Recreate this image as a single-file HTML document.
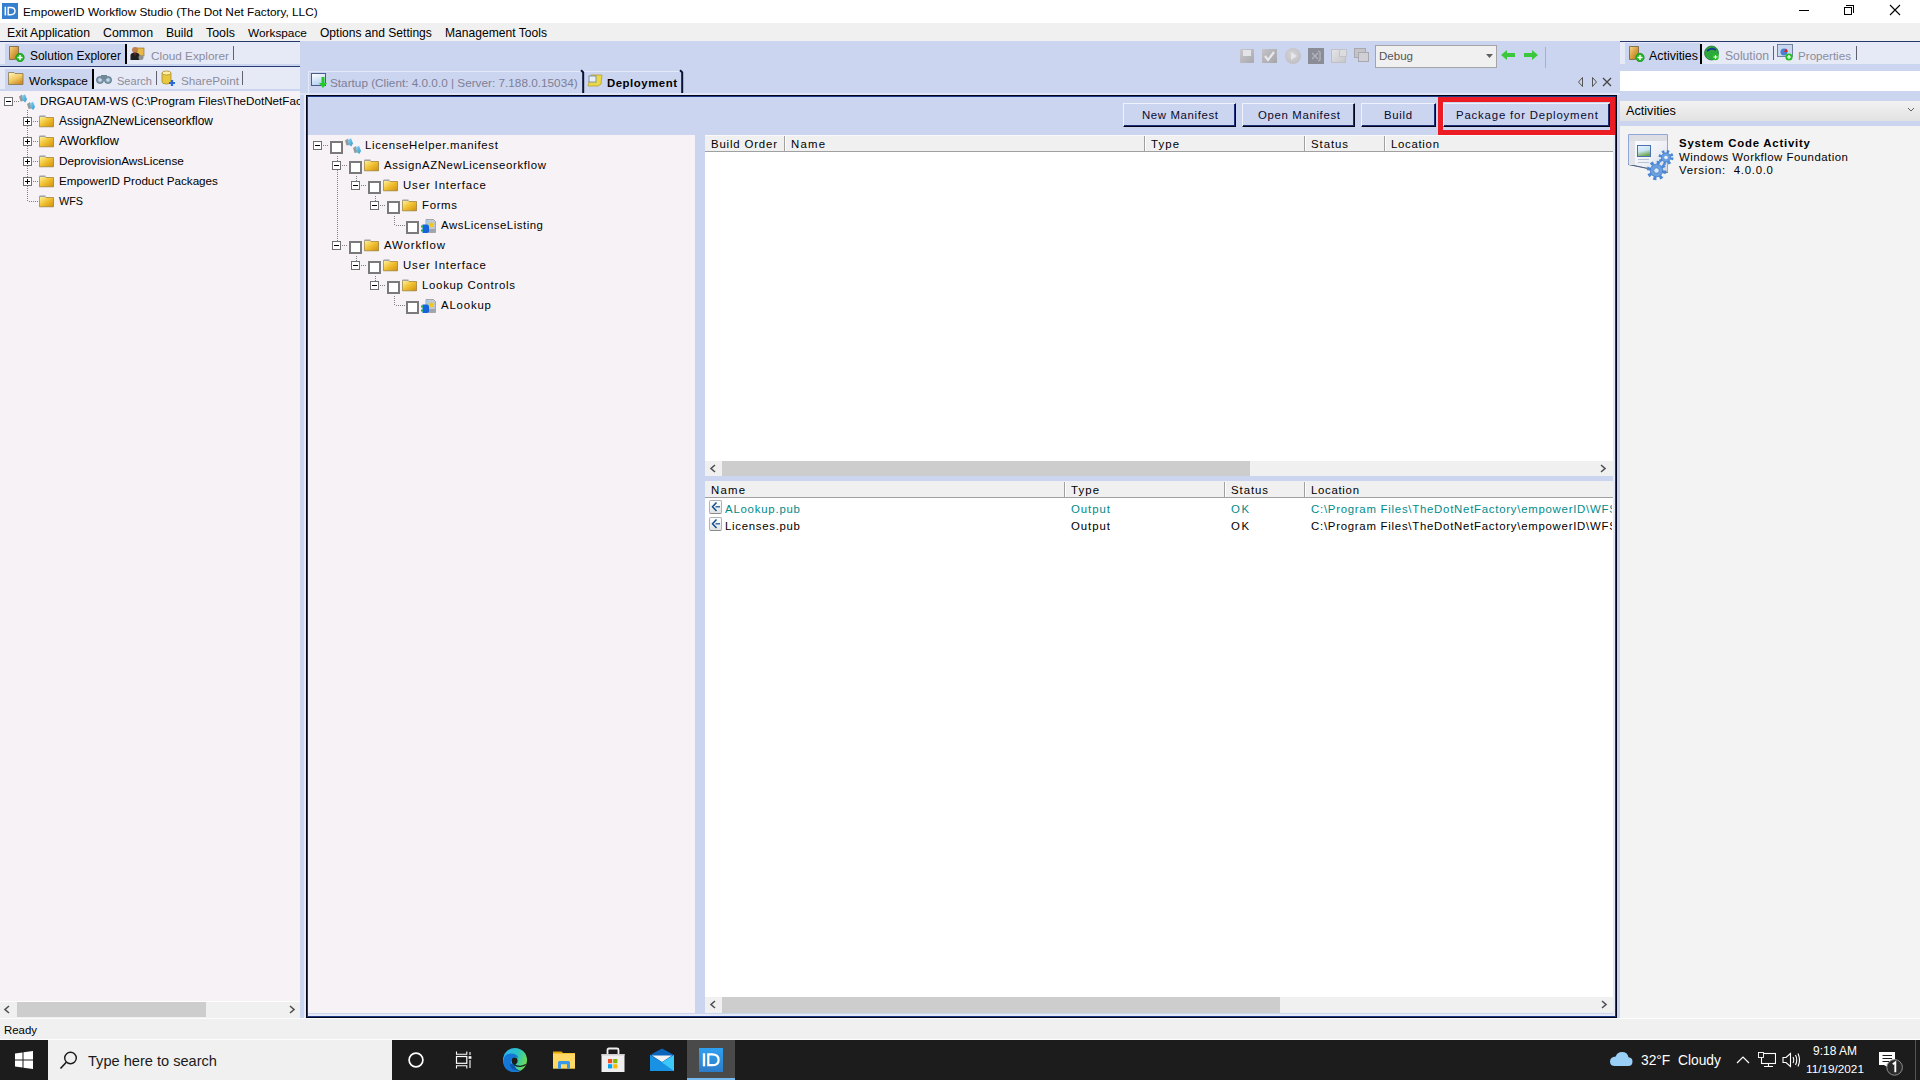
<!DOCTYPE html>
<html><head><meta charset="utf-8">
<style>
*{margin:0;padding:0;box-sizing:border-box}
html,body{width:1920px;height:1080px;overflow:hidden;background:#f0f0f0;font-family:"Liberation Sans",sans-serif;font-size:12px;color:#000}
.a{position:absolute}
.t{position:absolute;white-space:nowrap;line-height:1}
</style></head><body>
<div class="a" style="left:0px;top:0px;width:1920px;height:23px;background:#fff"></div>
<div class="a" style="left:2px;top:3px;width:16px;height:16px;background:#3480cf"></div>
<svg class="a" style="left:2px;top:3px" width="16" height="16"><rect x="2.6" y="3.8" width="1.5" height="8.6" fill="#fff"/><path d="M6.2 4.5H8.6Q13 4.5 13 8.1Q13 11.7 8.6 11.7H6.2Z" stroke="#fff" stroke-width="1.4" fill="none"/></svg>
<div class="t" style="left:23px;top:7px;font-size:11.81px;color:#000;font-weight:normal;">EmpowerID Workflow Studio (The Dot Net Factory, LLC)</div>
<div class="a" style="left:1799px;top:10px;width:10px;height:1px;background:#000"></div>
<div class="a" style="left:1846px;top:5px;width:8px;height:8px;border:1px solid #000;border-left:none;border-bottom:none"></div>
<div class="a" style="left:1844px;top:7px;width:8px;height:8px;border:1px solid #000;background:#fff"></div>
<svg class="a" style="left:1889px;top:4px" width="12" height="12"><path d="M1 1L11 11M11 1L1 11" stroke="#000" stroke-width="1.1"/></svg>
<div class="a" style="left:0px;top:23px;width:1920px;height:18px;background:#f0f0f0"></div>
<div class="t" style="left:7px;top:27px;font-size:12.24px;color:#000;font-weight:normal;">Exit Application</div>
<div class="t" style="left:103px;top:27px;font-size:12.33px;color:#000;font-weight:normal;">Common</div>
<div class="t" style="left:166px;top:27px;font-size:12.14px;color:#000;font-weight:normal;">Build</div>
<div class="t" style="left:206px;top:27px;font-size:12.42px;color:#000;font-weight:normal;">Tools</div>
<div class="t" style="left:248px;top:28px;font-size:11.84px;color:#000;font-weight:normal;">Workspace</div>
<div class="t" style="left:320px;top:27px;font-size:12.06px;color:#000;font-weight:normal;">Options and Settings</div>
<div class="t" style="left:445px;top:27px;font-size:12.1px;color:#000;font-weight:normal;">Management Tools</div>
<div class="a" style="left:0px;top:41px;width:300px;height:1px;background:#27396f"></div>
<div class="a" style="left:0px;top:42px;width:300px;height:24px;background:#e6e9f6"></div>
<div class="a" style="left:5px;top:44px;width:120px;height:20px;background:#cbd5ef"></div>
<div class="a" style="left:0px;top:64px;width:300px;height:2px;background:#cbd5ef"></div>
<div class="a" style="left:0px;top:66px;width:300px;height:1px;background:#27396f"></div>
<div class="a" style="left:0px;top:67px;width:300px;height:24px;background:#e6e9f6"></div>
<div class="a" style="left:5px;top:69px;width:87px;height:20px;background:#cbd5ef"></div>
<div class="a" style="left:0px;top:89px;width:300px;height:2px;background:#cbd5ef"></div>
<div class="a" style="left:0px;top:91px;width:300px;height:910px;background:#f6f2f6"></div>
<div class="a" style="left:0px;top:1001px;width:300px;height:17px;background:#f0f0f0"></div>
<div class="a" style="left:300px;top:41px;width:1320px;height:977px;background:#cbd5ef"></div>
<svg class="a" style="left:8px;top:45px" width="17" height="17"><path d="M1.5 1.5H10.5V13.5L6 14.5H1.5Z" fill="url(#sg)" stroke="#706040" stroke-width="0.8"/><circle cx="12" cy="12.5" r="4.2" fill="#22b822" stroke="#108010" stroke-width="0.6"/><path d="M12 10V15M9.5 12.5H14.5" stroke="#fff" stroke-width="1.4"/></svg>
<div class="t" style="left:30px;top:51px;font-size:11.95px;color:#000;font-weight:normal;">Solution Explorer</div>
<div class="a" style="left:125px;top:44px;width:2px;height:20px;background:#000"></div>
<svg class="a" style="left:130px;top:46px" width="15" height="15"><rect x="6" y="2" width="8" height="8" fill="#e8b848" stroke="#8a6a20" stroke-width="0.6"/><circle cx="5" cy="4" r="3" fill="#c08050"/><path d="M0.5 14V9Q1 6.5 5 6.5Q9 6.5 9.5 9V14Z" fill="#202020"/><path d="M4.5 7L5 11L5.5 7Z" fill="#d02020"/><circle cx="11" cy="11.5" r="2.5" fill="#909090"/></svg>
<div class="t" style="left:151px;top:50px;font-size:11.79px;color:#8c8c9c;font-weight:normal;">Cloud Explorer</div>
<div class="a" style="left:233px;top:46px;width:1px;height:14px;background:#606070"></div>
<svg class="a" style="left:8px;top:72px" width="16" height="13"><path d="M0.5 0.5H6L7 1.5H15V12.5H0.5Z" fill="url(#fg2)" stroke="#7a6a40" stroke-width="0.7"/></svg>
<div class="t" style="left:29px;top:76px;font-size:11.84px;color:#000;font-weight:normal;">Workspace</div>
<div class="a" style="left:92px;top:69px;width:2px;height:20px;background:#000"></div>
<svg class="a" style="left:96px;top:73px" width="16" height="11"><circle cx="4" cy="7" r="3.6" fill="#7a9ab0" stroke="#506070" stroke-width="0.6"/><circle cx="12" cy="7" r="3.6" fill="#7a9ab0" stroke="#506070" stroke-width="0.6"/><rect x="5" y="2" width="6" height="4" fill="#708898"/><circle cx="4" cy="7" r="1.8" fill="#c8dce8"/><circle cx="12" cy="7" r="1.8" fill="#c8dce8"/></svg>
<div class="t" style="left:117px;top:76px;font-size:11.05px;color:#8c8c9c;font-weight:normal;">Search</div>
<div class="a" style="left:156px;top:71px;width:1px;height:14px;background:#606070"></div>
<svg class="a" style="left:161px;top:70px" width="15" height="17"><path d="M1 3V12Q1 14 5.5 14Q10 14 10 12V3Z" fill="#e8c840" stroke="#a08020" stroke-width="0.7"/><ellipse cx="5.5" cy="3" rx="4.5" ry="2" fill="#fff0a0" stroke="#a08020" stroke-width="0.7"/><path d="M11 10V16M8 13H14" stroke="#2a6ad8" stroke-width="2.2"/></svg>
<div class="t" style="left:181px;top:75px;font-size:11.72px;color:#8c8c9c;font-weight:normal;">SharePoint</div>
<div class="a" style="left:242px;top:71px;width:1px;height:14px;background:#606070"></div>
<svg width="0" height="0" style="position:absolute"><defs><linearGradient id="sg" x1="0" y1="0" x2="1" y2="1"><stop offset="0" stop-color="#f8d890"/><stop offset="0.5" stop-color="#d8a040"/><stop offset="1" stop-color="#b07820"/></linearGradient><linearGradient id="fg2" x1="0" y1="0" x2="0.6" y2="1"><stop offset="0" stop-color="#fff8c0"/><stop offset="0.6" stop-color="#f0c860"/><stop offset="1" stop-color="#d09030"/></linearGradient></defs></svg>
<div class="a" style="left:0px;top:1001px;width:300px;height:1px;background:#fff"></div>
<div class="a" style="left:17px;top:1002px;width:189px;height:15px;background:#cdcdcd"></div>
<svg class="a" style="left:3px;top:1005px" width="8" height="9"><path d="M6 1L2 4.5L6 8" stroke="#505050" stroke-width="1.6" fill="none"/></svg>
<svg class="a" style="left:288px;top:1005px" width="8" height="9"><path d="M2 1L6 4.5L2 8" stroke="#505050" stroke-width="1.6" fill="none"/></svg>
<div class="a" style="left:1240px;top:49px;width:14px;height:14px;background:linear-gradient(135deg,#c8c8cc,#a8a8ae);border-radius:1px"></div>
<div class="a" style="left:1243px;top:50px;width:8px;height:6px;background:#e4e4e8"></div>
<div class="a" style="left:1262px;top:49px;width:15px;height:14px;background:linear-gradient(135deg,#c4c4c8,#a4a4aa)"></div>
<svg class="a" style="left:1262px;top:49px" width="15" height="14"><path d="M3 7L6 11L12 3" stroke="#e8e8ec" stroke-width="2.2" fill="none"/></svg>
<div class="a" style="left:1285px;top:48px;width:16px;height:16px;background:radial-gradient(circle at 45% 40%,#d4d4d8,#b8b8be);border-radius:50%"></div>
<svg class="a" style="left:1285px;top:48px" width="16" height="16"><path d="M6 4L12 8L6 12Z" fill="#e6e6ea"/></svg>
<div class="a" style="left:1308px;top:48px;width:16px;height:16px;background:#8a8c96"></div>
<svg class="a" style="left:1308px;top:48px" width="16" height="16"><path d="M4 5L10 11M4 11L10 5M10 3L12 4V12L10 13" stroke="#b4b6be" stroke-width="1.3" fill="none"/></svg>
<div class="a" style="left:1331px;top:49px;width:15px;height:14px;background:linear-gradient(135deg,#e4e4e8,#c8c8cc);border:1px solid #c0c0c4"></div>
<div class="a" style="left:1339px;top:49px;width:8px;height:8px;background:#dcdce0;border:1px solid #c4c4c8"></div>
<div class="a" style="left:1354px;top:48px;width:12px;height:10px;background:#c4c4c8;border:1px solid #a8a8ae"></div>
<div class="a" style="left:1358px;top:52px;width:11px;height:10px;background:#d0d0d4;border:1px solid #a8a8ae"></div>
<div class="a" style="left:1375px;top:45px;width:122px;height:23px;background:#f0f0f0;border:1px solid #a4a4a8"></div>
<div class="t" style="left:1379px;top:51px;font-size:11.54px;color:#555;font-weight:normal;">Debug</div>
<svg class="a" style="left:1486px;top:54px" width="7" height="4"><path d="M0 0H7L3.5 4Z" fill="#606060"/></svg>
<svg class="a" style="left:1500px;top:49px" width="16" height="12"><path d="M1 6L7 1V4H15V8H7V11Z" fill="#3cc83c"/></svg>
<svg class="a" style="left:1523px;top:49px" width="16" height="12"><path d="M15 6L9 1V4H1V8H9V11Z" fill="#3cc83c"/></svg>
<div class="a" style="left:1545px;top:47px;width:1px;height:21px;background:#a8b0c8"></div>
<svg class="a" style="left:1576px;top:76px" width="44" height="12"><path d="M6.5 1.5L2.5 6L6.5 10.5Z" stroke="#555" fill="none"/><path d="M16.5 1.5L20.5 6L16.5 10.5Z" stroke="#555" fill="none"/><path d="M27 2L35 10M35 2L27 10" stroke="#444" stroke-width="1.3"/></svg>
<div class="a" style="left:308px;top:71px;width:274px;height:1px;background:#e4e9f8"></div>
<div class="a" style="left:308px;top:71px;width:1px;height:22px;background:#e4e9f8"></div>
<div class="a" style="left:584px;top:71px;width:98px;height:1px;background:#e4e9f8"></div>
<div class="a" style="left:300px;top:93px;width:1320px;height:2px;background:#dfe5f6"></div>
<div class="a" style="left:311px;top:73px;width:15px;height:13px;background:linear-gradient(160deg,#ffffff,#a8c8f0);border:1px solid #4a5a8a"></div>
<svg class="a" style="left:319px;top:77px" width="8" height="12"><path d="M2.5 0H5.5V6H8L4 11L0 6H2.5Z" fill="#22cc22"/></svg>
<div class="t" style="left:330px;top:77px;font-size:11.78px;color:#7e7e96;font-weight:normal;">Startup (Client: 4.0.0.0 | Server: 7.188.0.15034)</div>
<svg class="a" style="left:580px;top:69px" width="6" height="25"><path d="M1 1.2L3.2 3.4V24" stroke="#0b1236" stroke-width="2" fill="none"/></svg>
<svg class="a" style="left:679px;top:69px" width="6" height="25"><path d="M1 1.2L3.2 3.4V24" stroke="#0b1236" stroke-width="2" fill="none"/></svg>
<svg class="a" style="left:587px;top:73px" width="16" height="15"><path d="M4 2H15L14 11L11 13H1Z" fill="#e8d84a" stroke="#b8a028" stroke-width="0.8"/><rect x="2" y="3" width="7" height="6" fill="#e8eef8" stroke="#7080a0" stroke-width="0.8"/></svg>
<div class="t" style="left:607px;top:78px;font-size:11.4px;color:#000;font-weight:bold;letter-spacing:0.528px;">Deployment</div>
<div class="a" style="left:306px;top:95px;width:1311px;height:923px;border:1px solid #02041a;box-shadow:inset 0 0 0 1px #1e3a86"></div>
<div class="a" style="left:304px;top:95px;width:2px;height:923px;background:#e6eaf8"></div>
<div class="a" style="left:308px;top:1014px;width:1307px;height:2px;background:#e6eaf8"></div>
<div class="a" style="left:1613px;top:97px;width:2px;height:919px;background:#e6eaf8"></div>
<div class="a" style="left:308px;top:135px;width:387px;height:878px;background:#f6f2f6"></div>
<div class="a" style="left:1123px;top:103px;width:113px;height:24px;background:#cbd5ef;border-style:solid;border-width:1px 1px 1px 1px;border-color:#eef2fb #02041a #02041a #eef2fb;box-shadow:inset -1px -1px 0 #1e3078"></div>
<div class="t" style="left:1142px;top:110px;font-size:11.4px;color:#0a0a30;font-weight:normal;letter-spacing:0.631px;">New Manifest</div>
<div class="a" style="left:1242px;top:103px;width:113px;height:24px;background:#cbd5ef;border-style:solid;border-width:1px 1px 1px 1px;border-color:#eef2fb #02041a #02041a #eef2fb;box-shadow:inset -1px -1px 0 #1e3078"></div>
<div class="t" style="left:1258px;top:110px;font-size:11.4px;color:#0a0a30;font-weight:normal;letter-spacing:0.655px;">Open Manifest</div>
<div class="a" style="left:1361px;top:103px;width:75px;height:24px;background:#cbd5ef;border-style:solid;border-width:1px 1px 1px 1px;border-color:#eef2fb #02041a #02041a #eef2fb;box-shadow:inset -1px -1px 0 #1e3078"></div>
<div class="t" style="left:1384px;top:110px;font-size:11.4px;color:#0a0a30;font-weight:normal;letter-spacing:0.662px;">Build</div>
<div class="a" style="left:1443px;top:103px;width:167px;height:24px;background:#cbd5ef;border-style:solid;border-width:1px 1px 1px 1px;border-color:#eef2fb #02041a #02041a #eef2fb;box-shadow:inset -1px -1px 0 #1e3078"></div>
<div class="t" style="left:1456px;top:110px;font-size:11.4px;color:#0a0a30;font-weight:normal;letter-spacing:0.817px;">Package for Deployment</div>
<div class="a" style="left:1438px;top:97px;width:177px;height:38px;border:5px solid #ec1c24"></div>
<div class="a" style="left:705px;top:135px;width:908px;height:326px;background:#fff"></div>
<div class="a" style="left:705px;top:135px;width:908px;height:17px;background:#f0f0f0;border-bottom:1px solid #a0a0a0;border-top:1px solid #fafafa"></div>
<div class="a" style="left:784px;top:136px;width:1px;height:15px;background:#a0a0a0"></div>
<div class="a" style="left:785px;top:136px;width:1px;height:15px;background:#fff"></div>
<div class="a" style="left:1144px;top:136px;width:1px;height:15px;background:#a0a0a0"></div>
<div class="a" style="left:1145px;top:136px;width:1px;height:15px;background:#fff"></div>
<div class="a" style="left:1304px;top:136px;width:1px;height:15px;background:#a0a0a0"></div>
<div class="a" style="left:1305px;top:136px;width:1px;height:15px;background:#fff"></div>
<div class="a" style="left:1384px;top:136px;width:1px;height:15px;background:#a0a0a0"></div>
<div class="a" style="left:1385px;top:136px;width:1px;height:15px;background:#fff"></div>
<div class="t" style="left:711px;top:139px;font-size:11.4px;color:#000;font-weight:normal;letter-spacing:0.834px;">Build Order</div>
<div class="t" style="left:791px;top:139px;font-size:11.4px;color:#000;font-weight:normal;letter-spacing:1.197px;">Name</div>
<div class="t" style="left:1151px;top:139px;font-size:11.4px;color:#000;font-weight:normal;letter-spacing:1.095px;">Type</div>
<div class="t" style="left:1311px;top:139px;font-size:11.4px;color:#000;font-weight:normal;letter-spacing:0.936px;">Status</div>
<div class="t" style="left:1391px;top:139px;font-size:11.4px;color:#000;font-weight:normal;letter-spacing:0.700px;">Location</div>
<div class="a" style="left:705px;top:461px;width:908px;height:15px;background:#f0f0f0"></div>
<div class="a" style="left:722px;top:461px;width:528px;height:15px;background:#cdcdcd"></div>
<svg class="a" style="left:709px;top:464px" width="8" height="9"><path d="M6 1L2 4.5L6 8" stroke="#505050" stroke-width="1.6" fill="none"/></svg>
<svg class="a" style="left:1599px;top:464px" width="8" height="9"><path d="M2 1L6 4.5L2 8" stroke="#505050" stroke-width="1.6" fill="none"/></svg>
<div class="a" style="left:705px;top:481px;width:908px;height:516px;background:#fff"></div>
<div class="a" style="left:705px;top:481px;width:908px;height:17px;background:#f0f0f0;border-bottom:1px solid #a0a0a0"></div>
<div class="a" style="left:1064px;top:482px;width:1px;height:15px;background:#a0a0a0"></div>
<div class="a" style="left:1065px;top:482px;width:1px;height:15px;background:#fff"></div>
<div class="a" style="left:1224px;top:482px;width:1px;height:15px;background:#a0a0a0"></div>
<div class="a" style="left:1225px;top:482px;width:1px;height:15px;background:#fff"></div>
<div class="a" style="left:1304px;top:482px;width:1px;height:15px;background:#a0a0a0"></div>
<div class="a" style="left:1305px;top:482px;width:1px;height:15px;background:#fff"></div>
<div class="t" style="left:711px;top:485px;font-size:11.4px;color:#000;font-weight:normal;letter-spacing:1.197px;">Name</div>
<div class="t" style="left:1071px;top:485px;font-size:11.4px;color:#000;font-weight:normal;letter-spacing:1.095px;">Type</div>
<div class="t" style="left:1231px;top:485px;font-size:11.4px;color:#000;font-weight:normal;letter-spacing:0.936px;">Status</div>
<div class="t" style="left:1311px;top:485px;font-size:11.4px;color:#000;font-weight:normal;letter-spacing:0.700px;">Location</div>
<div class="a" style="left:709px;top:500px;width:13px;height:14px;background:linear-gradient(#ffffff,#e2e2e2);border:1px solid #b0b0b0;border-bottom-color:#8a8a8a;border-radius:2px"></div>
<svg class="a" style="left:709px;top:500px" width="13" height="14"><path d="M7.5 2.5L3.5 6.8L7.5 11" stroke="#0c4c94" stroke-width="1.5" fill="none"/><path d="M6.5 6.8H11" stroke="#0c4c94" stroke-width="1.2"/></svg>
<div class="t" style="left:725px;top:504px;font-size:11.4px;color:#008b8b;font-weight:normal;letter-spacing:0.781px;">ALookup.pub</div>
<div class="t" style="left:1071px;top:504px;font-size:11.4px;color:#008b8b;font-weight:normal;letter-spacing:0.955px;">Output</div>
<div class="t" style="left:1231px;top:504px;font-size:11.4px;color:#008b8b;font-weight:normal;letter-spacing:1.529px;">OK</div>
<div class="t" style="left:1311px;top:504px;font-size:11.4px;color:#008b8b;font-weight:normal;width:301px;overflow:hidden;letter-spacing:0.744px;">C:\Program Files\TheDotNetFactory\empowerID\WFS</div>
<div class="a" style="left:709px;top:517px;width:13px;height:14px;background:linear-gradient(#ffffff,#e2e2e2);border:1px solid #b0b0b0;border-bottom-color:#8a8a8a;border-radius:2px"></div>
<svg class="a" style="left:709px;top:517px" width="13" height="14"><path d="M7.5 2.5L3.5 6.8L7.5 11" stroke="#0c4c94" stroke-width="1.5" fill="none"/><path d="M6.5 6.8H11" stroke="#0c4c94" stroke-width="1.2"/></svg>
<div class="t" style="left:725px;top:521px;font-size:11.4px;color:#000;font-weight:normal;letter-spacing:0.711px;">Licenses.pub</div>
<div class="t" style="left:1071px;top:521px;font-size:11.4px;color:#000;font-weight:normal;letter-spacing:0.955px;">Output</div>
<div class="t" style="left:1231px;top:521px;font-size:11.4px;color:#000;font-weight:normal;letter-spacing:1.529px;">OK</div>
<div class="t" style="left:1311px;top:521px;font-size:11.4px;color:#000;font-weight:normal;width:301px;overflow:hidden;letter-spacing:0.744px;">C:\Program Files\TheDotNetFactory\empowerID\WFS</div>
<div class="a" style="left:705px;top:997px;width:908px;height:16px;background:#f0f0f0"></div>
<div class="a" style="left:722px;top:997px;width:558px;height:16px;background:#cdcdcd"></div>
<svg class="a" style="left:709px;top:1000px" width="8" height="9"><path d="M6 1L2 4.5L6 8" stroke="#505050" stroke-width="1.6" fill="none"/></svg>
<svg class="a" style="left:1600px;top:1000px" width="8" height="9"><path d="M2 1L6 4.5L2 8" stroke="#505050" stroke-width="1.6" fill="none"/></svg>
<svg width="0" height="0" style="position:absolute"><defs><linearGradient id="fg" x1="0" y1="0" x2="1" y2="1"><stop offset="0" stop-color="#fff4a0"/><stop offset="0.5" stop-color="#f0c030"/><stop offset="1" stop-color="#d09010"/></linearGradient></defs></svg>
<div class="a" style="left:4px;top:97px;width:9px;height:9px;background:#fff;border:1px solid #707070"></div>
<div class="a" style="left:6px;top:101px;width:5px;height:1px;background:#000"></div>
<div class="a" style="left:14px;top:101px;width:1px;height:1px;background:#808080"></div>
<div class="a" style="left:16px;top:101px;width:1px;height:1px;background:#808080"></div>
<div class="a" style="left:18px;top:101px;width:1px;height:1px;background:#808080"></div>
<svg class="a" style="left:18px;top:93px" width="17" height="17"><defs><linearGradient id="mb" x1="0" y1="0" x2="1" y2="1"><stop offset="0" stop-color="#8ad8f8"/><stop offset="1" stop-color="#2a98d0"/></linearGradient></defs><path d="M1 3.5L4 1.5L5.5 8L2.5 8.5Z" fill="#9a9a9a"/><path d="M4 3L7 1.2L9 6.5L7.2 9.5L4.8 7.5Z" fill="url(#mb)"/><path d="M9 11L12 9L13.5 15.5L10.5 16Z" fill="#9a9a9a"/><path d="M12 10.5L15 8.7L17 14L15.2 17L12.8 15Z" fill="url(#mb)"/></svg>
<div class="t" style="left:40px;top:95px;font-size:11.65px;color:#000;font-weight:normal;width:260px;overflow:hidden;">DRGAUTAM-WS (C:\Program Files\TheDotNetFac</div>
<div class="a" style="left:27px;top:110px;width:1px;height:1px;background:#808080"></div>
<div class="a" style="left:27px;top:112px;width:1px;height:1px;background:#808080"></div>
<div class="a" style="left:27px;top:114px;width:1px;height:1px;background:#808080"></div>
<div class="a" style="left:27px;top:116px;width:1px;height:1px;background:#808080"></div>
<div class="a" style="left:27px;top:118px;width:1px;height:1px;background:#808080"></div>
<div class="a" style="left:27px;top:120px;width:1px;height:1px;background:#808080"></div>
<div class="a" style="left:27px;top:122px;width:1px;height:1px;background:#808080"></div>
<div class="a" style="left:27px;top:124px;width:1px;height:1px;background:#808080"></div>
<div class="a" style="left:27px;top:126px;width:1px;height:1px;background:#808080"></div>
<div class="a" style="left:27px;top:128px;width:1px;height:1px;background:#808080"></div>
<div class="a" style="left:27px;top:130px;width:1px;height:1px;background:#808080"></div>
<div class="a" style="left:27px;top:132px;width:1px;height:1px;background:#808080"></div>
<div class="a" style="left:27px;top:134px;width:1px;height:1px;background:#808080"></div>
<div class="a" style="left:27px;top:136px;width:1px;height:1px;background:#808080"></div>
<div class="a" style="left:27px;top:138px;width:1px;height:1px;background:#808080"></div>
<div class="a" style="left:27px;top:140px;width:1px;height:1px;background:#808080"></div>
<div class="a" style="left:27px;top:142px;width:1px;height:1px;background:#808080"></div>
<div class="a" style="left:27px;top:144px;width:1px;height:1px;background:#808080"></div>
<div class="a" style="left:27px;top:146px;width:1px;height:1px;background:#808080"></div>
<div class="a" style="left:27px;top:148px;width:1px;height:1px;background:#808080"></div>
<div class="a" style="left:27px;top:150px;width:1px;height:1px;background:#808080"></div>
<div class="a" style="left:27px;top:152px;width:1px;height:1px;background:#808080"></div>
<div class="a" style="left:27px;top:154px;width:1px;height:1px;background:#808080"></div>
<div class="a" style="left:27px;top:156px;width:1px;height:1px;background:#808080"></div>
<div class="a" style="left:27px;top:158px;width:1px;height:1px;background:#808080"></div>
<div class="a" style="left:27px;top:160px;width:1px;height:1px;background:#808080"></div>
<div class="a" style="left:27px;top:162px;width:1px;height:1px;background:#808080"></div>
<div class="a" style="left:27px;top:164px;width:1px;height:1px;background:#808080"></div>
<div class="a" style="left:27px;top:166px;width:1px;height:1px;background:#808080"></div>
<div class="a" style="left:27px;top:168px;width:1px;height:1px;background:#808080"></div>
<div class="a" style="left:27px;top:170px;width:1px;height:1px;background:#808080"></div>
<div class="a" style="left:27px;top:172px;width:1px;height:1px;background:#808080"></div>
<div class="a" style="left:27px;top:174px;width:1px;height:1px;background:#808080"></div>
<div class="a" style="left:27px;top:176px;width:1px;height:1px;background:#808080"></div>
<div class="a" style="left:27px;top:178px;width:1px;height:1px;background:#808080"></div>
<div class="a" style="left:27px;top:180px;width:1px;height:1px;background:#808080"></div>
<div class="a" style="left:27px;top:182px;width:1px;height:1px;background:#808080"></div>
<div class="a" style="left:27px;top:184px;width:1px;height:1px;background:#808080"></div>
<div class="a" style="left:27px;top:186px;width:1px;height:1px;background:#808080"></div>
<div class="a" style="left:27px;top:188px;width:1px;height:1px;background:#808080"></div>
<div class="a" style="left:27px;top:190px;width:1px;height:1px;background:#808080"></div>
<div class="a" style="left:27px;top:192px;width:1px;height:1px;background:#808080"></div>
<div class="a" style="left:27px;top:194px;width:1px;height:1px;background:#808080"></div>
<div class="a" style="left:27px;top:196px;width:1px;height:1px;background:#808080"></div>
<div class="a" style="left:27px;top:198px;width:1px;height:1px;background:#808080"></div>
<div class="a" style="left:27px;top:200px;width:1px;height:1px;background:#808080"></div>
<div class="a" style="left:23px;top:117px;width:9px;height:9px;background:#fff;border:1px solid #707070"></div>
<div class="a" style="left:25px;top:121px;width:5px;height:1px;background:#000"></div>
<div class="a" style="left:27px;top:119px;width:1px;height:5px;background:#000"></div>
<div class="a" style="left:33px;top:121px;width:1px;height:1px;background:#808080"></div>
<div class="a" style="left:35px;top:121px;width:1px;height:1px;background:#808080"></div>
<div class="a" style="left:37px;top:121px;width:1px;height:1px;background:#808080"></div>
<svg class="a" style="left:39px;top:115px" width="15" height="13"><path d="M0.5 1.5H6L7 2.5H14.5V11.8H0.5Z" fill="url(#fg)" stroke="#8a6a20" stroke-width="0.6"/><rect x="0.5" y="0.5" width="6" height="1.5" fill="#a0a0a8"/></svg>
<div class="t" style="left:59px;top:116px;font-size:11.94px;color:#000;font-weight:normal;">AssignAZNewLicenseorkflow</div>
<div class="a" style="left:23px;top:137px;width:9px;height:9px;background:#fff;border:1px solid #707070"></div>
<div class="a" style="left:25px;top:141px;width:5px;height:1px;background:#000"></div>
<div class="a" style="left:27px;top:139px;width:1px;height:5px;background:#000"></div>
<div class="a" style="left:33px;top:141px;width:1px;height:1px;background:#808080"></div>
<div class="a" style="left:35px;top:141px;width:1px;height:1px;background:#808080"></div>
<div class="a" style="left:37px;top:141px;width:1px;height:1px;background:#808080"></div>
<svg class="a" style="left:39px;top:135px" width="15" height="13"><path d="M0.5 1.5H6L7 2.5H14.5V11.8H0.5Z" fill="url(#fg)" stroke="#8a6a20" stroke-width="0.6"/><rect x="0.5" y="0.5" width="6" height="1.5" fill="#a0a0a8"/></svg>
<div class="t" style="left:59px;top:135px;font-size:12.7px;color:#000;font-weight:normal;">AWorkflow</div>
<div class="a" style="left:23px;top:157px;width:9px;height:9px;background:#fff;border:1px solid #707070"></div>
<div class="a" style="left:25px;top:161px;width:5px;height:1px;background:#000"></div>
<div class="a" style="left:27px;top:159px;width:1px;height:5px;background:#000"></div>
<div class="a" style="left:33px;top:161px;width:1px;height:1px;background:#808080"></div>
<div class="a" style="left:35px;top:161px;width:1px;height:1px;background:#808080"></div>
<div class="a" style="left:37px;top:161px;width:1px;height:1px;background:#808080"></div>
<svg class="a" style="left:39px;top:155px" width="15" height="13"><path d="M0.5 1.5H6L7 2.5H14.5V11.8H0.5Z" fill="url(#fg)" stroke="#8a6a20" stroke-width="0.6"/><rect x="0.5" y="0.5" width="6" height="1.5" fill="#a0a0a8"/></svg>
<div class="t" style="left:59px;top:155px;font-size:11.79px;color:#000;font-weight:normal;">DeprovisionAwsLicense</div>
<div class="a" style="left:23px;top:177px;width:9px;height:9px;background:#fff;border:1px solid #707070"></div>
<div class="a" style="left:25px;top:181px;width:5px;height:1px;background:#000"></div>
<div class="a" style="left:27px;top:179px;width:1px;height:5px;background:#000"></div>
<div class="a" style="left:33px;top:181px;width:1px;height:1px;background:#808080"></div>
<div class="a" style="left:35px;top:181px;width:1px;height:1px;background:#808080"></div>
<div class="a" style="left:37px;top:181px;width:1px;height:1px;background:#808080"></div>
<svg class="a" style="left:39px;top:175px" width="15" height="13"><path d="M0.5 1.5H6L7 2.5H14.5V11.8H0.5Z" fill="url(#fg)" stroke="#8a6a20" stroke-width="0.6"/><rect x="0.5" y="0.5" width="6" height="1.5" fill="#a0a0a8"/></svg>
<div class="t" style="left:59px;top:175px;font-size:11.68px;color:#000;font-weight:normal;">EmpowerID Product Packages</div>
<div class="a" style="left:29px;top:201px;width:1px;height:1px;background:#808080"></div>
<div class="a" style="left:31px;top:201px;width:1px;height:1px;background:#808080"></div>
<div class="a" style="left:33px;top:201px;width:1px;height:1px;background:#808080"></div>
<div class="a" style="left:35px;top:201px;width:1px;height:1px;background:#808080"></div>
<div class="a" style="left:37px;top:201px;width:1px;height:1px;background:#808080"></div>
<svg class="a" style="left:39px;top:195px" width="15" height="13"><path d="M0.5 1.5H6L7 2.5H14.5V11.8H0.5Z" fill="url(#fg)" stroke="#8a6a20" stroke-width="0.6"/><rect x="0.5" y="0.5" width="6" height="1.5" fill="#a0a0a8"/></svg>
<div class="t" style="left:59px;top:196px;font-size:10.8px;color:#000;font-weight:normal;">WFS</div>
<div class="a" style="left:337px;top:156px;width:1px;height:1px;background:#808080"></div>
<div class="a" style="left:337px;top:158px;width:1px;height:1px;background:#808080"></div>
<div class="a" style="left:337px;top:160px;width:1px;height:1px;background:#808080"></div>
<div class="a" style="left:337px;top:162px;width:1px;height:1px;background:#808080"></div>
<div class="a" style="left:337px;top:164px;width:1px;height:1px;background:#808080"></div>
<div class="a" style="left:337px;top:166px;width:1px;height:1px;background:#808080"></div>
<div class="a" style="left:337px;top:168px;width:1px;height:1px;background:#808080"></div>
<div class="a" style="left:337px;top:170px;width:1px;height:1px;background:#808080"></div>
<div class="a" style="left:337px;top:172px;width:1px;height:1px;background:#808080"></div>
<div class="a" style="left:337px;top:174px;width:1px;height:1px;background:#808080"></div>
<div class="a" style="left:337px;top:176px;width:1px;height:1px;background:#808080"></div>
<div class="a" style="left:337px;top:178px;width:1px;height:1px;background:#808080"></div>
<div class="a" style="left:337px;top:180px;width:1px;height:1px;background:#808080"></div>
<div class="a" style="left:337px;top:182px;width:1px;height:1px;background:#808080"></div>
<div class="a" style="left:337px;top:184px;width:1px;height:1px;background:#808080"></div>
<div class="a" style="left:337px;top:186px;width:1px;height:1px;background:#808080"></div>
<div class="a" style="left:337px;top:188px;width:1px;height:1px;background:#808080"></div>
<div class="a" style="left:337px;top:190px;width:1px;height:1px;background:#808080"></div>
<div class="a" style="left:337px;top:192px;width:1px;height:1px;background:#808080"></div>
<div class="a" style="left:337px;top:194px;width:1px;height:1px;background:#808080"></div>
<div class="a" style="left:337px;top:196px;width:1px;height:1px;background:#808080"></div>
<div class="a" style="left:337px;top:198px;width:1px;height:1px;background:#808080"></div>
<div class="a" style="left:337px;top:200px;width:1px;height:1px;background:#808080"></div>
<div class="a" style="left:337px;top:202px;width:1px;height:1px;background:#808080"></div>
<div class="a" style="left:337px;top:204px;width:1px;height:1px;background:#808080"></div>
<div class="a" style="left:337px;top:206px;width:1px;height:1px;background:#808080"></div>
<div class="a" style="left:337px;top:208px;width:1px;height:1px;background:#808080"></div>
<div class="a" style="left:337px;top:210px;width:1px;height:1px;background:#808080"></div>
<div class="a" style="left:337px;top:212px;width:1px;height:1px;background:#808080"></div>
<div class="a" style="left:337px;top:214px;width:1px;height:1px;background:#808080"></div>
<div class="a" style="left:337px;top:216px;width:1px;height:1px;background:#808080"></div>
<div class="a" style="left:337px;top:218px;width:1px;height:1px;background:#808080"></div>
<div class="a" style="left:337px;top:220px;width:1px;height:1px;background:#808080"></div>
<div class="a" style="left:337px;top:222px;width:1px;height:1px;background:#808080"></div>
<div class="a" style="left:337px;top:224px;width:1px;height:1px;background:#808080"></div>
<div class="a" style="left:337px;top:226px;width:1px;height:1px;background:#808080"></div>
<div class="a" style="left:337px;top:228px;width:1px;height:1px;background:#808080"></div>
<div class="a" style="left:337px;top:230px;width:1px;height:1px;background:#808080"></div>
<div class="a" style="left:337px;top:232px;width:1px;height:1px;background:#808080"></div>
<div class="a" style="left:337px;top:234px;width:1px;height:1px;background:#808080"></div>
<div class="a" style="left:337px;top:236px;width:1px;height:1px;background:#808080"></div>
<div class="a" style="left:337px;top:238px;width:1px;height:1px;background:#808080"></div>
<div class="a" style="left:337px;top:240px;width:1px;height:1px;background:#808080"></div>
<div class="a" style="left:356px;top:176px;width:1px;height:1px;background:#808080"></div>
<div class="a" style="left:356px;top:178px;width:1px;height:1px;background:#808080"></div>
<div class="a" style="left:356px;top:180px;width:1px;height:1px;background:#808080"></div>
<div class="a" style="left:375px;top:196px;width:1px;height:1px;background:#808080"></div>
<div class="a" style="left:375px;top:198px;width:1px;height:1px;background:#808080"></div>
<div class="a" style="left:375px;top:200px;width:1px;height:1px;background:#808080"></div>
<div class="a" style="left:394px;top:216px;width:1px;height:1px;background:#808080"></div>
<div class="a" style="left:394px;top:218px;width:1px;height:1px;background:#808080"></div>
<div class="a" style="left:394px;top:220px;width:1px;height:1px;background:#808080"></div>
<div class="a" style="left:394px;top:222px;width:1px;height:1px;background:#808080"></div>
<div class="a" style="left:394px;top:224px;width:1px;height:1px;background:#808080"></div>
<div class="a" style="left:356px;top:256px;width:1px;height:1px;background:#808080"></div>
<div class="a" style="left:356px;top:258px;width:1px;height:1px;background:#808080"></div>
<div class="a" style="left:356px;top:260px;width:1px;height:1px;background:#808080"></div>
<div class="a" style="left:375px;top:276px;width:1px;height:1px;background:#808080"></div>
<div class="a" style="left:375px;top:278px;width:1px;height:1px;background:#808080"></div>
<div class="a" style="left:375px;top:280px;width:1px;height:1px;background:#808080"></div>
<div class="a" style="left:394px;top:296px;width:1px;height:1px;background:#808080"></div>
<div class="a" style="left:394px;top:298px;width:1px;height:1px;background:#808080"></div>
<div class="a" style="left:394px;top:300px;width:1px;height:1px;background:#808080"></div>
<div class="a" style="left:394px;top:302px;width:1px;height:1px;background:#808080"></div>
<div class="a" style="left:394px;top:304px;width:1px;height:1px;background:#808080"></div>
<div class="a" style="left:313px;top:141px;width:9px;height:9px;background:#fff;border:1px solid #707070"></div>
<div class="a" style="left:315px;top:145px;width:5px;height:1px;background:#000"></div>
<div class="a" style="left:323px;top:145px;width:1px;height:1px;background:#808080"></div>
<div class="a" style="left:325px;top:145px;width:1px;height:1px;background:#808080"></div>
<div class="a" style="left:327px;top:145px;width:1px;height:1px;background:#808080"></div>
<div class="a" style="left:330px;top:141px;width:13px;height:13px;background:#fff;border:2px solid #7a7a7a"></div>
<svg class="a" style="left:344px;top:137px" width="17" height="17"><defs><linearGradient id="mb" x1="0" y1="0" x2="1" y2="1"><stop offset="0" stop-color="#8ad8f8"/><stop offset="1" stop-color="#2a98d0"/></linearGradient></defs><path d="M1 3.5L4 1.5L5.5 8L2.5 8.5Z" fill="#9a9a9a"/><path d="M4 3L7 1.2L9 6.5L7.2 9.5L4.8 7.5Z" fill="url(#mb)"/><path d="M9 11L12 9L13.5 15.5L10.5 16Z" fill="#9a9a9a"/><path d="M12 10.5L15 8.7L17 14L15.2 17L12.8 15Z" fill="url(#mb)"/></svg>
<div class="t" style="left:365px;top:140px;font-size:11.4px;color:#000;font-weight:normal;letter-spacing:0.691px;">LicenseHelper.manifest</div>
<div class="a" style="left:332px;top:161px;width:9px;height:9px;background:#fff;border:1px solid #707070"></div>
<div class="a" style="left:334px;top:165px;width:5px;height:1px;background:#000"></div>
<div class="a" style="left:342px;top:165px;width:1px;height:1px;background:#808080"></div>
<div class="a" style="left:344px;top:165px;width:1px;height:1px;background:#808080"></div>
<div class="a" style="left:346px;top:165px;width:1px;height:1px;background:#808080"></div>
<div class="a" style="left:349px;top:161px;width:13px;height:13px;background:#fff;border:2px solid #7a7a7a"></div>
<svg class="a" style="left:364px;top:159px" width="15" height="13"><path d="M0.5 1.5H6L7 2.5H14.5V11.8H0.5Z" fill="url(#fg)" stroke="#8a6a20" stroke-width="0.6"/><rect x="0.5" y="0.5" width="6" height="1.5" fill="#a0a0a8"/></svg>
<div class="t" style="left:384px;top:160px;font-size:11.4px;color:#000;font-weight:normal;letter-spacing:0.625px;">AssignAZNewLicenseorkflow</div>
<div class="a" style="left:351px;top:181px;width:9px;height:9px;background:#fff;border:1px solid #707070"></div>
<div class="a" style="left:353px;top:185px;width:5px;height:1px;background:#000"></div>
<div class="a" style="left:361px;top:185px;width:1px;height:1px;background:#808080"></div>
<div class="a" style="left:363px;top:185px;width:1px;height:1px;background:#808080"></div>
<div class="a" style="left:365px;top:185px;width:1px;height:1px;background:#808080"></div>
<div class="a" style="left:368px;top:181px;width:13px;height:13px;background:#fff;border:2px solid #7a7a7a"></div>
<svg class="a" style="left:383px;top:179px" width="15" height="13"><path d="M0.5 1.5H6L7 2.5H14.5V11.8H0.5Z" fill="url(#fg)" stroke="#8a6a20" stroke-width="0.6"/><rect x="0.5" y="0.5" width="6" height="1.5" fill="#a0a0a8"/></svg>
<div class="t" style="left:403px;top:180px;font-size:11.4px;color:#000;font-weight:normal;letter-spacing:0.877px;">User Interface</div>
<div class="a" style="left:370px;top:201px;width:9px;height:9px;background:#fff;border:1px solid #707070"></div>
<div class="a" style="left:372px;top:205px;width:5px;height:1px;background:#000"></div>
<div class="a" style="left:380px;top:205px;width:1px;height:1px;background:#808080"></div>
<div class="a" style="left:382px;top:205px;width:1px;height:1px;background:#808080"></div>
<div class="a" style="left:384px;top:205px;width:1px;height:1px;background:#808080"></div>
<div class="a" style="left:387px;top:201px;width:13px;height:13px;background:#fff;border:2px solid #7a7a7a"></div>
<svg class="a" style="left:402px;top:199px" width="15" height="13"><path d="M0.5 1.5H6L7 2.5H14.5V11.8H0.5Z" fill="url(#fg)" stroke="#8a6a20" stroke-width="0.6"/><rect x="0.5" y="0.5" width="6" height="1.5" fill="#a0a0a8"/></svg>
<div class="t" style="left:422px;top:200px;font-size:11.4px;color:#000;font-weight:normal;letter-spacing:0.676px;">Forms</div>
<div class="a" style="left:396px;top:225px;width:1px;height:1px;background:#808080"></div>
<div class="a" style="left:398px;top:225px;width:1px;height:1px;background:#808080"></div>
<div class="a" style="left:400px;top:225px;width:1px;height:1px;background:#808080"></div>
<div class="a" style="left:402px;top:225px;width:1px;height:1px;background:#808080"></div>
<div class="a" style="left:404px;top:225px;width:1px;height:1px;background:#808080"></div>
<div class="a" style="left:406px;top:221px;width:13px;height:13px;background:#fff;border:2px solid #7a7a7a"></div>
<svg class="a" style="left:421px;top:219px" width="15" height="14"><path d="M5 0.5H12.5L14.5 2.5V13.5H5Z" fill="#c4c8d2" stroke="#8a8e98" stroke-width="0.7"/><rect x="5.5" y="1" width="2.5" height="6" fill="#a8cce8"/><rect x="5.5" y="10" width="8.5" height="3" fill="#a0a4ac"/><path d="M10.5 2L11.5 4.6H14L12 6.2L12.8 8.8L10.5 7.3L8.2 8.8L9 6.2L7 4.6H9.5Z" fill="#f0c818"/><path d="M1.5 5.5H6.5L8 7V12.5L6.5 14H1.5Z" fill="#1464dc"/><rect x="0" y="6.5" width="2.2" height="2" fill="#22b040"/><rect x="0" y="10.5" width="2.2" height="2" fill="#22b040"/></svg>
<div class="t" style="left:441px;top:220px;font-size:11.4px;color:#000;font-weight:normal;letter-spacing:0.526px;">AwsLicenseListing</div>
<div class="a" style="left:332px;top:241px;width:9px;height:9px;background:#fff;border:1px solid #707070"></div>
<div class="a" style="left:334px;top:245px;width:5px;height:1px;background:#000"></div>
<div class="a" style="left:342px;top:245px;width:1px;height:1px;background:#808080"></div>
<div class="a" style="left:344px;top:245px;width:1px;height:1px;background:#808080"></div>
<div class="a" style="left:346px;top:245px;width:1px;height:1px;background:#808080"></div>
<div class="a" style="left:349px;top:241px;width:13px;height:13px;background:#fff;border:2px solid #7a7a7a"></div>
<svg class="a" style="left:364px;top:239px" width="15" height="13"><path d="M0.5 1.5H6L7 2.5H14.5V11.8H0.5Z" fill="url(#fg)" stroke="#8a6a20" stroke-width="0.6"/><rect x="0.5" y="0.5" width="6" height="1.5" fill="#a0a0a8"/></svg>
<div class="t" style="left:384px;top:240px;font-size:11.4px;color:#000;font-weight:normal;letter-spacing:0.894px;">AWorkflow</div>
<div class="a" style="left:351px;top:261px;width:9px;height:9px;background:#fff;border:1px solid #707070"></div>
<div class="a" style="left:353px;top:265px;width:5px;height:1px;background:#000"></div>
<div class="a" style="left:361px;top:265px;width:1px;height:1px;background:#808080"></div>
<div class="a" style="left:363px;top:265px;width:1px;height:1px;background:#808080"></div>
<div class="a" style="left:365px;top:265px;width:1px;height:1px;background:#808080"></div>
<div class="a" style="left:368px;top:261px;width:13px;height:13px;background:#fff;border:2px solid #7a7a7a"></div>
<svg class="a" style="left:383px;top:259px" width="15" height="13"><path d="M0.5 1.5H6L7 2.5H14.5V11.8H0.5Z" fill="url(#fg)" stroke="#8a6a20" stroke-width="0.6"/><rect x="0.5" y="0.5" width="6" height="1.5" fill="#a0a0a8"/></svg>
<div class="t" style="left:403px;top:260px;font-size:11.4px;color:#000;font-weight:normal;letter-spacing:0.877px;">User Interface</div>
<div class="a" style="left:370px;top:281px;width:9px;height:9px;background:#fff;border:1px solid #707070"></div>
<div class="a" style="left:372px;top:285px;width:5px;height:1px;background:#000"></div>
<div class="a" style="left:380px;top:285px;width:1px;height:1px;background:#808080"></div>
<div class="a" style="left:382px;top:285px;width:1px;height:1px;background:#808080"></div>
<div class="a" style="left:384px;top:285px;width:1px;height:1px;background:#808080"></div>
<div class="a" style="left:387px;top:281px;width:13px;height:13px;background:#fff;border:2px solid #7a7a7a"></div>
<svg class="a" style="left:402px;top:279px" width="15" height="13"><path d="M0.5 1.5H6L7 2.5H14.5V11.8H0.5Z" fill="url(#fg)" stroke="#8a6a20" stroke-width="0.6"/><rect x="0.5" y="0.5" width="6" height="1.5" fill="#a0a0a8"/></svg>
<div class="t" style="left:422px;top:280px;font-size:11.4px;color:#000;font-weight:normal;letter-spacing:0.713px;">Lookup Controls</div>
<div class="a" style="left:396px;top:305px;width:1px;height:1px;background:#808080"></div>
<div class="a" style="left:398px;top:305px;width:1px;height:1px;background:#808080"></div>
<div class="a" style="left:400px;top:305px;width:1px;height:1px;background:#808080"></div>
<div class="a" style="left:402px;top:305px;width:1px;height:1px;background:#808080"></div>
<div class="a" style="left:404px;top:305px;width:1px;height:1px;background:#808080"></div>
<div class="a" style="left:406px;top:301px;width:13px;height:13px;background:#fff;border:2px solid #7a7a7a"></div>
<svg class="a" style="left:421px;top:299px" width="15" height="14"><path d="M5 0.5H12.5L14.5 2.5V13.5H5Z" fill="#c4c8d2" stroke="#8a8e98" stroke-width="0.7"/><rect x="5.5" y="1" width="2.5" height="6" fill="#a8cce8"/><rect x="5.5" y="10" width="8.5" height="3" fill="#a0a4ac"/><path d="M10.5 2L11.5 4.6H14L12 6.2L12.8 8.8L10.5 7.3L8.2 8.8L9 6.2L7 4.6H9.5Z" fill="#f0c818"/><path d="M1.5 5.5H6.5L8 7V12.5L6.5 14H1.5Z" fill="#1464dc"/><rect x="0" y="6.5" width="2.2" height="2" fill="#22b040"/><rect x="0" y="10.5" width="2.2" height="2" fill="#22b040"/></svg>
<div class="t" style="left:441px;top:300px;font-size:11.4px;color:#000;font-weight:normal;letter-spacing:0.832px;">ALookup</div>
<div class="a" style="left:1620px;top:41px;width:300px;height:1px;background:#27396f"></div>
<div class="a" style="left:1620px;top:42px;width:300px;height:22px;background:#e6e9f6"></div>
<div class="a" style="left:1620px;top:64px;width:300px;height:954px;background:#cbd5ef"></div>
<div class="a" style="left:1625px;top:43px;width:75px;height:21px;background:#cbd5ef"></div>
<div class="a" style="left:1620px;top:71px;width:300px;height:20px;background:#fff"></div>
<div class="a" style="left:1620px;top:101px;width:300px;height:20px;background:linear-gradient(#f2f2f2,#e2e2e2)"></div>
<div class="a" style="left:1620px;top:126px;width:300px;height:892px;background:#f3f3f3"></div>
<svg class="a" style="left:1628px;top:45px" width="17" height="17"><path d="M1.5 1.5H10.5V13.5L6 14.5H1.5Z" fill="url(#sg)" stroke="#706040" stroke-width="0.8"/><circle cx="12" cy="12.5" r="4.2" fill="#22b822" stroke="#108010" stroke-width="0.6"/><path d="M12 10V15M9.5 12.5H14.5" stroke="#fff" stroke-width="1.4"/></svg>
<div class="t" style="left:1649px;top:50px;font-size:12.42px;color:#000;font-weight:normal;">Activities</div>
<div class="a" style="left:1700px;top:44px;width:2px;height:20px;background:#000"></div>
<svg class="a" style="left:1704px;top:45px" width="16" height="16"><circle cx="7.5" cy="8" r="7" fill="#2ca83c" stroke="#1a6a2a" stroke-width="0.7"/><path d="M3 6Q7 2 12 5" stroke="#1a3a8a" stroke-width="2" fill="none"/><circle cx="11.5" cy="12" r="3.2" fill="#22c022"/><path d="M11.5 10V14M9.5 12H13.5" stroke="#fff" stroke-width="1.1"/></svg>
<div class="t" style="left:1725px;top:50px;font-size:12.18px;color:#8c8c9c;font-weight:normal;">Solution</div>
<div class="a" style="left:1773px;top:46px;width:1px;height:14px;background:#606070"></div>
<svg class="a" style="left:1777px;top:44px" width="17" height="17"><rect x="0.5" y="0.5" width="15" height="12" fill="#c8d8f0" stroke="#5a6a8a" stroke-width="0.8"/><circle cx="7" cy="8" r="3.5" fill="#4a80d0"/><path d="M7 8L9 4.5Q11 6 10.5 8Z" fill="#e02020"/><circle cx="12" cy="13" r="3.6" fill="#22c022"/><path d="M12 11V15M10 13H14" stroke="#fff" stroke-width="1.2"/></svg>
<div class="t" style="left:1798px;top:50px;font-size:11.63px;color:#8c8c9c;font-weight:normal;">Properties</div>
<div class="a" style="left:1856px;top:46px;width:1px;height:14px;background:#606070"></div>
<div class="t" style="left:1626px;top:105px;font-size:12.67px;color:#000;font-weight:normal;">Activities</div>
<svg class="a" style="left:1907px;top:107px" width="8" height="6"><path d="M1 1L4 4L7 1" stroke="#606060" stroke-width="1" fill="none"/></svg>
<svg class="a" style="left:1627px;top:133px" width="48" height="48"><defs><linearGradient id="wg" x1="0" y1="0" x2="1" y2="1"><stop offset="0" stop-color="#ffffff"/><stop offset="0.6" stop-color="#eef0f6"/><stop offset="1" stop-color="#d0d6e4"/></linearGradient><linearGradient id="pg" x1="0" y1="0" x2="0.3" y2="1"><stop offset="0" stop-color="#e8f4fc"/><stop offset="0.55" stop-color="#c8e4f4"/><stop offset="1" stop-color="#70a850"/></linearGradient></defs><path d="M1.5 1.5H40.5V39.5L1.5 31.5Z" fill="url(#wg)" stroke="#8ea6d8" stroke-width="1"/><path d="M1.5 31.5L40.5 39.5" stroke="#50607a" stroke-width="1"/><rect x="2" y="2" width="38" height="6" fill="#dcdee4"/><rect x="2" y="8" width="6" height="24" fill="#e2e4ea"/><rect x="10.5" y="12.5" width="13" height="11" fill="url(#pg)" stroke="#4a70b0" stroke-width="1"/><path d="M11 26.5H22M11 29.5H22" stroke="#b8c4d8" stroke-width="1"/><g fill="none" stroke="#4a88d8"><circle cx="39" cy="24.5" r="6" stroke-width="3" stroke-dasharray="2.36 2.36"/><circle cx="29.5" cy="37.5" r="8" stroke-width="3.4" stroke-dasharray="3.14 3.14"/></g><circle cx="39" cy="24.5" r="4.6" fill="#6aa0e0" stroke="#3a78c8" stroke-width="0.8"/><circle cx="29.5" cy="37.5" r="6.3" fill="#6aa0e0" stroke="#3a78c8" stroke-width="0.8"/><circle cx="39" cy="24.5" r="1.8" fill="#e8f0fa"/><circle cx="29.5" cy="37.5" r="2.6" fill="#dce8f8" stroke="#3a78c8" stroke-width="0.6"/></svg>
<div class="t" style="left:1679px;top:138px;font-size:11.4px;color:#000;font-weight:bold;letter-spacing:0.782px;">System Code Activity</div>
<div class="t" style="left:1679px;top:152px;font-size:11.4px;color:#000;font-weight:normal;letter-spacing:0.489px;">Windows Workflow Foundation</div>
<div class="t" style="left:1679px;top:165px;font-size:11.4px;color:#000;font-weight:normal;letter-spacing:0.726px;">Version:&nbsp;&nbsp;4.0.0.0</div>
<div class="a" style="left:1620px;top:1001px;width:300px;height:17px;background:#f3f3f3"></div>
<div class="a" style="left:1617px;top:95px;width:3px;height:923px;background:#cbd5ef"></div>
<div class="a" style="left:0px;top:1018px;width:1920px;height:1px;background:#fcfcfc"></div>
<div class="a" style="left:0px;top:1019px;width:1920px;height:20px;background:#f0f0f0"></div>
<div class="a" style="left:0px;top:1039px;width:1920px;height:1px;background:#fcfcfc"></div>
<div class="t" style="left:4px;top:1025px;font-size:11.42px;color:#000;font-weight:normal;">Ready</div>
<div class="a" style="left:0px;top:1040px;width:1920px;height:40px;background:#1c1c1c"></div>
<div class="a" style="left:48px;top:1040px;width:344px;height:40px;background:#f0f0f0"></div>
<div class="t" style="left:88px;top:1054px;font-size:14.6px;color:#1a1a1a;font-weight:normal;">Type here to search</div>
<div class="a" style="left:687px;top:1040px;width:48px;height:40px;background:#4a4a4a"></div>
<div class="a" style="left:687px;top:1078px;width:48px;height:2px;background:#76b9ed"></div>
<svg class="a" style="left:15px;top:1051px" width="18" height="18"><path d="M0 2.5L7.5 1.4V8.5H0ZM8.5 1.3L18 0V8.5H8.5ZM0 9.5H7.5V16.6L0 15.5ZM8.5 9.5H18V18L8.5 16.7Z" fill="#fff"/></svg>
<svg class="a" style="left:59px;top:1051px" width="19" height="19"><circle cx="11.5" cy="7" r="5.8" stroke="#1a1a1a" stroke-width="1.4" fill="none"/><path d="M7.3 11.2L1.5 17.5" stroke="#1a1a1a" stroke-width="1.6"/></svg>
<svg class="a" style="left:407px;top:1051px" width="18" height="18"><circle cx="9" cy="9" r="6.9" stroke="#fff" stroke-width="1.7" fill="none"/></svg>
<svg class="a" style="left:454px;top:1050px" width="20" height="20"><path d="M2.5 1.5V4.3H12.8V1.5M2.5 18.5V15.7H12.8V18.5" stroke="#fff" stroke-width="1.1" fill="none"/><rect x="2.5" y="6.5" width="10.3" height="6.8" stroke="#fff" stroke-width="1.2" fill="none"/><path d="M16 2V5M16 10V18" stroke="#fff" stroke-width="1.1"/><rect x="14.6" y="6.2" width="2.8" height="2.6" fill="#fff"/></svg>
<svg class="a" style="left:503px;top:1048px" width="24" height="24"><defs><linearGradient id="eg" x1="0" y1="0.2" x2="1" y2="0.6"><stop offset="0" stop-color="#2ab4f4"/><stop offset="0.55" stop-color="#2cc4c0"/><stop offset="1" stop-color="#70e050"/></linearGradient></defs><circle cx="12" cy="12" r="12" fill="url(#eg)"/><path d="M0.3 13Q1 6 8 5.5Q14 5.5 15.5 10Q11 8 8.5 11.5Q6.5 16 10 20.5Q13 24 17.5 22.8Q15 24 12 24Q0.5 24 0.3 13Z" fill="#1476d6"/><path d="M6.8 16Q7 20 11 22Q14 23.5 17.5 22.8Q12 21 11.5 17Q11.3 15 12.5 14.5" fill="#0e58b0"/><ellipse cx="11.6" cy="12.8" rx="3" ry="3.4" fill="#1c1c1c"/><path d="M11 16.2Q13 18.5 17.5 18.3Q21 18 22.8 16.5" stroke="#1c1c1c" stroke-width="1.3" fill="none"/></svg>
<svg class="a" style="left:553px;top:1051px" width="22" height="19"><path d="M0 0.5H8.5L10 2H22V17.5H0Z" fill="#e8a800"/><rect x="0" y="2.5" width="22" height="15" fill="#ffd865"/><path d="M5 17.8V11.5Q5 10 6.5 10H15.5Q17 10 17 11.5V17.8H14V13.2H8V17.8Z" fill="#3a98e8"/></svg>
<svg class="a" style="left:601px;top:1047px" width="24" height="26"><path d="M6.5 7V3Q6.5 1.5 8 1.5H16Q17.5 1.5 17.5 3V7" stroke="#f0f0f0" stroke-width="1.8" fill="none"/><rect x="0.5" y="7" width="23" height="18" fill="#efefef"/><rect x="0.5" y="7" width="23" height="1.5" fill="#cfcfcf"/><rect x="7" y="12" width="4.2" height="4.2" fill="#f25022"/><rect x="12.2" y="12" width="4.2" height="4.2" fill="#7fba00"/><rect x="7" y="17.2" width="4.2" height="4.2" fill="#00a4ef"/><rect x="12.2" y="17.2" width="4.2" height="4.2" fill="#ffb900"/></svg>
<svg class="a" style="left:650px;top:1048px" width="24" height="24"><path d="M0 7L12 0.5L24 7V23H0Z" fill="#0c64bc"/><path d="M2 7.5H22L12 14Z" fill="#f2f2f2"/><path d="M0 7L12 14.5L24 7V23H0Z" fill="#1a92e4"/><path d="M24 7V23L12 14.5Z" fill="#3cc8f8"/></svg>
<div class="a" style="left:699px;top:1048px;width:24px;height:24px;background:linear-gradient(#30a0f0,#2c7cc8)"></div>
<svg class="a" style="left:699px;top:1048px" width="24" height="24"><rect x="3.8" y="5.3" width="2.4" height="13" fill="#fff"/><path d="M9.3 6.4H13Q19.6 6.4 19.6 11.9Q19.6 17.2 13 17.2H9.3Z" stroke="#fff" stroke-width="2.2" fill="none"/></svg>
<svg class="a" style="left:1609px;top:1051px" width="24" height="16"><path d="M6 15H19Q23.5 15 23.5 10.5Q23.5 6.5 19.5 6.2Q18.5 1 13 1Q8 1 6.8 5.5Q1 6 1 10.5Q1 15 6 15Z" fill="#9ad0f8"/><path d="M6 15H19Q23.5 15 23.5 10.5" fill="none" stroke="#5aa8e8" stroke-width="0"/></svg>
<div class="t" style="left:1641px;top:1054px;font-size:13.81px;color:#fff;font-weight:normal;">32°F&nbsp;&nbsp;Cloudy</div>
<svg class="a" style="left:1736px;top:1055px" width="14" height="9"><path d="M1 8L7 2L13 8" stroke="#fff" stroke-width="1.2" fill="none"/></svg>
<svg class="a" style="left:1758px;top:1052px" width="18" height="16"><rect x="3.5" y="1.5" width="14" height="10" stroke="#fff" stroke-width="1.1" fill="none"/><path d="M10.5 11.5V14.5M6 14.5H15" stroke="#fff" stroke-width="1.1"/><rect x="0.5" y="0.5" width="5" height="5" fill="#1c1c1c" stroke="#fff" stroke-width="0.9"/></svg>
<svg class="a" style="left:1782px;top:1052px" width="18" height="16"><path d="M1 5.5H4L8.5 1.5V14.5L4 10.5H1Z" stroke="#fff" stroke-width="1.1" fill="none"/><path d="M11 5Q12.5 8 11 11M13.5 3Q16 8 13.5 13M16 1.5Q19 8 16 14.5" stroke="#fff" stroke-width="1.1" fill="none"/></svg>
<div class="t" style="left:1813px;top:1045px;font-size:11.99px;color:#fff;font-weight:normal;">9:18 AM</div>
<div class="t" style="left:1806px;top:1063px;font-size:11.76px;color:#fff;font-weight:normal;">11/19/2021</div>
<svg class="a" style="left:1878px;top:1050px" width="28" height="28"><path d="M1 2H17V15H9L11 18L6 15H1Z" fill="#fff"/><path d="M4.5 5.5H14M4.5 8.5H14M4.5 11.5H11" stroke="#1c1c1c" stroke-width="1"/><circle cx="16.6" cy="17.4" r="7.8" fill="#2a2a2a" stroke="#909090" stroke-width="1"/><path d="M14.8 14.2L17.3 12.3V22.3" stroke="#fff" stroke-width="1.9" fill="none"/></svg>
<div class="a" style="left:1915px;top:1040px;width:1px;height:40px;background:#555"></div>
</body></html>
